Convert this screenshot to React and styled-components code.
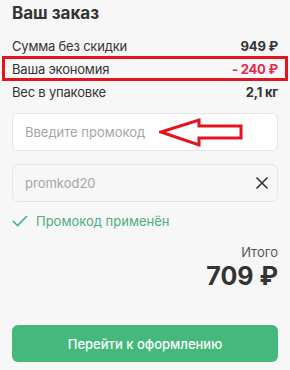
import React from 'react'
import styled, { createGlobalStyle } from 'styled-components'

const GlobalStyle = createGlobalStyle`
  body {
    margin: 0;
    background: #f7f7f7;
    font-family: Inter, 'Noto Sans', sans-serif;
    color: #333;
  }
`

const rows = [
  { label: 'Сумма без скидки', value: '949 ₽' },
  { label: 'Ваша экономия', value: '- 240 ₽', accent: true },
  { label: 'Вес в упаковке', value: '2,1 кг' }
]

export default function App() {
  return (
    <Panel>
      <GlobalStyle />
      <Title>Ваш заказ</Title>
      <Summary>
        {rows.map(r => (
          <Row key={r.label} $accent={r.accent}>
            <Label>{r.label}</Label>
            <Value $accent={r.accent}>{r.value}</Value>
          </Row>
        ))}
      </Summary>
      <Field>
        <Input placeholder="Введите промокод" />
        <Arrow width="90" height="32" viewBox="0 0 90 32">
          <polygon
            points="2,15 40,3 40,9 82,9 82,21 40,21 40,28"
            fill="none"
            stroke="#e3141f"
            strokeWidth="3"
            strokeLinejoin="miter"
          />
        </Arrow>
      </Field>
      <Field $applied>
        <Input $applied defaultValue="promkod20" readOnly />
        <Clear>
          <svg width="14" height="14" viewBox="0 0 14 14">
            <path d="M1.5 1.5 L12.5 12.5 M12.5 1.5 L1.5 12.5" stroke="#333" strokeWidth="1.6" />
          </svg>
        </Clear>
      </Field>
      <Applied>
        <svg width="16" height="12" viewBox="0 0 16 12">
          <path d="M1 6 L5.5 10.5 L15 1" fill="none" stroke="#4cae7e" strokeWidth="1.6" />
        </svg>
        Промокод применён
      </Applied>
      <Total>
        <TotalLabel>Итого</TotalLabel>
        <TotalValue>709 ₽</TotalValue>
      </Total>
      <Submit>Перейти к оформлению</Submit>
    </Panel>
  )
}

const Panel = styled.div`
  padding: 1px 12px 8px;
  display: flex;
  flex-direction: column;
`

const Title = styled.h2`
  margin: 0;
  font-size: 17px;
  line-height: 24px;
  font-weight: 700;
  color: #333;
`

const Summary = styled.div`
  margin-top: 9px;
  display: flex;
  flex-direction: column;
`

const Row = styled.div`
  display: flex;
  justify-content: space-between;
  align-items: center;
  height: 23px;
  font-size: 13px;
  letter-spacing: -0.2px;
  ${p =>
    p.$accent &&
    `
    margin: -1px -10px;
    padding: 0 10px;
    height: 25px;
    box-shadow: inset 0 0 0 3px #e3141f;
  `}
`

const Label = styled.span`
  color: #333;
`

const Value = styled.span`
  font-weight: 700;
  color: ${p => (p.$accent ? '#e3284b' : '#333')};
`

const Field = styled.div`
  position: relative;
  margin-top: ${p => (p.$applied ? '13px' : '10px')};
`

const Input = styled.input`
  box-sizing: border-box;
  width: 100%;
  height: 38px;
  padding: 0 40px 0 12px;
  border: 1px solid #e6e6e6;
  border-radius: 6px;
  background: ${p => (p.$applied ? '#f7f7f7' : '#fff')};
  font-family: inherit;
  font-size: 13px;
  color: #a6a6a6;
  outline: none;
  &::placeholder {
    color: #a6a6a6;
  }
`

const Arrow = styled.svg`
  position: absolute;
  left: 147px;
  top: 4px;
`

const Clear = styled.span`
  position: absolute;
  right: 9px;
  top: 12px;
  display: flex;
`

const Applied = styled.div`
  margin-top: 11px;
  display: flex;
  align-items: center;
  gap: 8px;
  font-size: 13px;
  color: #4cae7e;
`

const Total = styled.div`
  margin-top: 15px;
  display: flex;
  flex-direction: column;
  align-items: flex-end;
`

const TotalLabel = styled.span`
  font-size: 13px;
  color: #555;
`

const TotalValue = styled.span`
  font-size: 25px;
  line-height: 32px;
  font-weight: 700;
  color: #333;
`

const Submit = styled.button`
  margin-top: 33px;
  height: 37px;
  border: 0;
  border-radius: 6px;
  background: #44b97b;
  color: #fff;
  font-family: inherit;
  font-size: 13px;
  font-weight: 500;
  cursor: pointer;
`
